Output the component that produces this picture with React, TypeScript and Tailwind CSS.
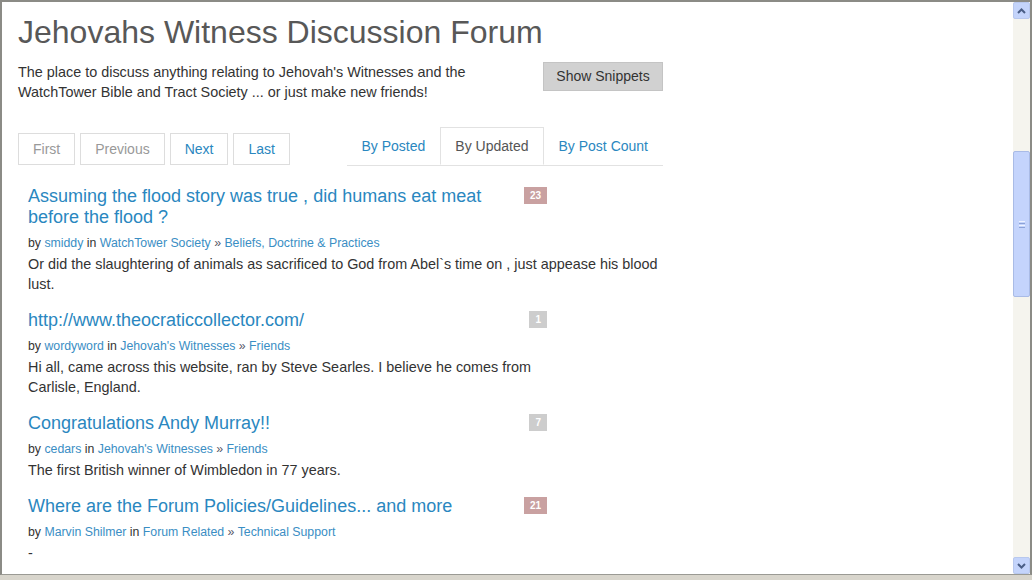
import React from 'react';

interface Post {
  title: string;
  count: number;
  hot: boolean;
  author: string;
  forum: string;
  category: string;
  snippet: React.ReactNode;
}

const posts: Post[] = [
  {
    title: 'Assuming the flood story was true , did humans eat meat before the flood ?',
    count: 23,
    hot: true,
    author: 'smiddy',
    forum: 'WatchTower Society',
    category: 'Beliefs, Doctrine & Practices',
    snippet: 'Or did the slaughtering of animals as sacrificed to God from Abel`s time on , just appease his blood lust.',
  },
  {
    title: 'http://www.theocraticcollector.com/',
    count: 1,
    hot: false,
    author: 'wordyword',
    forum: "Jehovah's Witnesses",
    category: 'Friends',
    snippet: (
      <>
        Hi all, came across this website, ran by Steve Searles. I believe he comes from
        <br />
        Carlisle, England.
      </>
    ),
  },
  {
    title: 'Congratulations Andy Murray!!',
    count: 7,
    hot: false,
    author: 'cedars',
    forum: "Jehovah's Witnesses",
    category: 'Friends',
    snippet: 'The first British winner of Wimbledon in 77 years.',
  },
  {
    title: 'Where are the Forum Policies/Guidelines... and more',
    count: 21,
    hot: true,
    author: 'Marvin Shilmer',
    forum: 'Forum Related',
    category: 'Technical Support',
    snippet: '-',
  },
];

const PostItem = ({ post }: { post: Post }) => (
  <div className="pl-[10px] mb-[16px]">
    <div className="flex items-start w-[519px]">
      <a className="max-w-[480px] text-[18px] leading-[21px] text-[#2a87c0]">{post.title}</a>
      <span
        className={
          'ml-auto mt-[1px] h-[17px] px-[6px] flex items-center text-[10px] font-bold text-white ' +
          (post.hot ? 'bg-[#c9a1a1]' : 'bg-[#cdcdcd]')
        }
      >
        {post.count}
      </span>
    </div>
    <div className="mt-[6px] text-[12.3px] leading-[18px] text-[#333]">
      by <a className="text-[#3a8ec4]">{post.author}</a> in{' '}
      <a className="text-[#3a8ec4]">{post.forum}</a> <span className="text-[#556]">»</span>{' '}
      <a className="text-[#3a8ec4]">{post.category}</a>
    </div>
    <p className="mt-[2px] text-[14.4px] leading-[20px] text-[#333]">{post.snippet}</p>
  </div>
);

const ScrollButton = ({ up }: { up: boolean }) => (
  <div className="h-[17px] w-[17px] rounded-[2px] border border-[#b8c8ee] bg-[#c4d4fb] flex items-center justify-center">
    <svg width="9" height="6" viewBox="0 0 9 6">
      <path
        d={up ? 'M1 5 L4.5 1.5 L8 5' : 'M1 1 L4.5 4.5 L8 1'}
        fill="none"
        stroke="#4a5e86"
        strokeWidth="2"
      />
    </svg>
  </div>
);

export default function App() {
  return (
    <div className="w-[1032px] h-[580px] flex flex-col bg-[#d8d5cc] font-['Liberation_Sans',Arial,sans-serif] overflow-hidden">
      <div className="flex h-[575px] border-t-2 border-l-2 border-r-2 border-[#8b8b86] border-b border-b-[#9a9a94]">
        <div className="flex-1 bg-white overflow-hidden pl-[16px]">
          <div className="w-[645px]">
            <h1 className="mt-[12px] text-[32px] leading-[36px] text-[#585858]">
              Jehovahs Witness Discussion Forum
            </h1>

            <div className="mt-[12px] flex items-start justify-between">
              <p className="w-[480px] text-[14.4px] leading-[20px] text-[#333]">
                The place to discuss anything relating to Jehovah's Witnesses and the WatchTower Bible and Tract
                Society ... or just make new friends!
              </p>
              <button className="h-[29px] w-[120px] bg-[#d1d1d1] border border-[#c4c4c4] text-[14px] text-[#333]">
                Show Snippets
              </button>
            </div>

            <div className="mt-[25px] flex items-end justify-between">
              <div className="flex gap-[5px] mb-[1px]">
                <span className="h-[32px] px-[14px] flex items-center border border-[#ddd] text-[14px] text-[#999]">First</span>
                <span className="h-[32px] px-[14px] flex items-center border border-[#ddd] text-[14px] text-[#999]">Previous</span>
                <a className="h-[32px] px-[14px] flex items-center border border-[#ddd] text-[14px] text-[#2a87c0]">Next</a>
                <a className="h-[32px] px-[14px] flex items-center border border-[#ddd] text-[14px] text-[#2a87c0]">Last</a>
              </div>
              <div className="flex border-b border-[#e2e2e2] text-[14px]">
                <a className="h-[38px] px-[14px] flex items-center border border-transparent text-[#2a87c0]">By Posted</a>
                <span className="h-[38px] px-[14px] -mb-px flex items-center border border-[#e2e2e2] border-b-white bg-white text-[#555]">
                  By Updated
                </span>
                <a className="h-[38px] px-[14px] flex items-center border border-transparent text-[#2a87c0]">By Post Count</a>
              </div>
            </div>

            <div className="mt-[20px]">
              {posts.map((p) => (
                <PostItem key={p.title} post={p} />
              ))}
            </div>
          </div>
        </div>

        <div className="w-[17px] bg-[#f5f4ee] flex flex-col">
          <ScrollButton up />
          <div className="flex-1 pt-[132px]">
            <div className="h-[146px] rounded-[2px] border border-[#a9bbe6] bg-[#c4d4fc] flex items-center justify-center">
              <div className="flex flex-col gap-[1px]">
                <div className="h-px w-[6px] bg-[#eef3ff]" />
                <div className="h-px w-[6px] bg-[#8ca2d6]" />
                <div className="h-px w-[6px] bg-[#eef3ff]" />
                <div className="h-px w-[6px] bg-[#8ca2d6]" />
              </div>
            </div>
          </div>
          <ScrollButton up={false} />
        </div>
      </div>
    </div>
  );
}
